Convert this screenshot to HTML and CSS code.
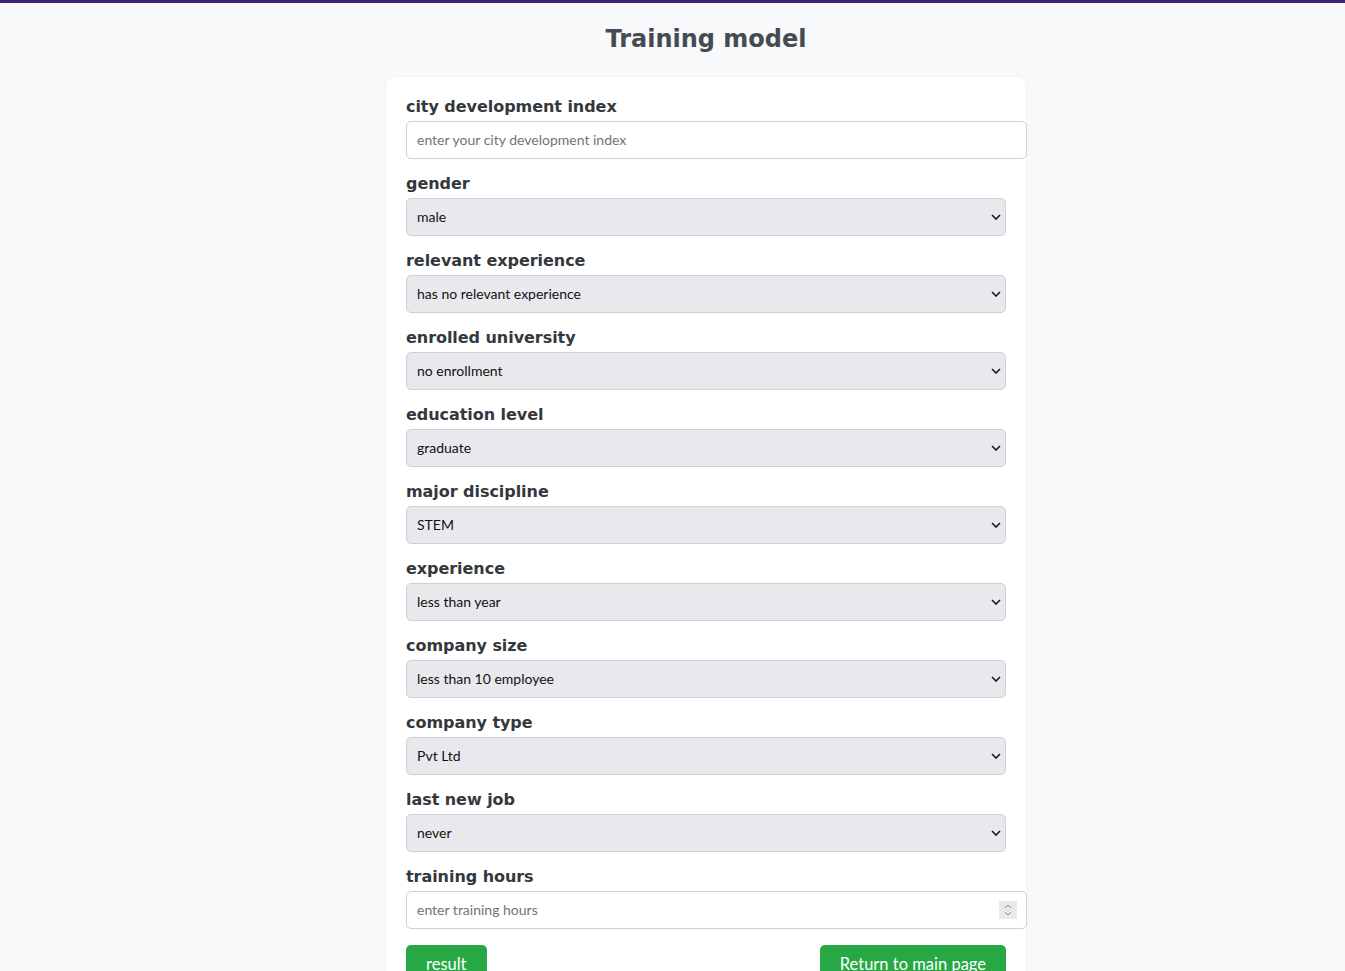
FILE: index.html
```html
<!DOCTYPE html>
<html lang="en">
<head>
<meta charset="utf-8">
<title>Training model</title>
<link rel="stylesheet" href="styles.css">
</head>
<body>
<div class="topbar"></div>
<main class="page">
  <h1 class="title">Training model</h1>
  <form class="card">
    <div class="field">
      <label class="label">city development index</label>
      <input class="text-input" type="text" placeholder="enter your city development index">
    </div>
    <div class="field">
      <label class="label">gender</label>
      <div class="select-wrap"><div class="select">male</div><svg class="chev" viewBox="0 0 10 6" width="10" height="6"><path d="M1 1l4 4 4-4" fill="none" stroke="#1a1a1a" stroke-width="1.6"/></svg></div>
    </div>
    <div class="field">
      <label class="label">relevant experience</label>
      <div class="select-wrap"><div class="select">has no relevant experience</div><svg class="chev" viewBox="0 0 10 6" width="10" height="6"><path d="M1 1l4 4 4-4" fill="none" stroke="#1a1a1a" stroke-width="1.6"/></svg></div>
    </div>
    <div class="field">
      <label class="label">enrolled university</label>
      <div class="select-wrap"><div class="select">no enrollment</div><svg class="chev" viewBox="0 0 10 6" width="10" height="6"><path d="M1 1l4 4 4-4" fill="none" stroke="#1a1a1a" stroke-width="1.6"/></svg></div>
    </div>
    <div class="field">
      <label class="label">education level</label>
      <div class="select-wrap"><div class="select">graduate</div><svg class="chev" viewBox="0 0 10 6" width="10" height="6"><path d="M1 1l4 4 4-4" fill="none" stroke="#1a1a1a" stroke-width="1.6"/></svg></div>
    </div>
    <div class="field">
      <label class="label">major discipline</label>
      <div class="select-wrap"><div class="select">STEM</div><svg class="chev" viewBox="0 0 10 6" width="10" height="6"><path d="M1 1l4 4 4-4" fill="none" stroke="#1a1a1a" stroke-width="1.6"/></svg></div>
    </div>
    <div class="field">
      <label class="label">experience</label>
      <div class="select-wrap"><div class="select">less than year</div><svg class="chev" viewBox="0 0 10 6" width="10" height="6"><path d="M1 1l4 4 4-4" fill="none" stroke="#1a1a1a" stroke-width="1.6"/></svg></div>
    </div>
    <div class="field">
      <label class="label">company size</label>
      <div class="select-wrap"><div class="select">less than 10 employee</div><svg class="chev" viewBox="0 0 10 6" width="10" height="6"><path d="M1 1l4 4 4-4" fill="none" stroke="#1a1a1a" stroke-width="1.6"/></svg></div>
    </div>
    <div class="field">
      <label class="label">company type</label>
      <div class="select-wrap"><div class="select">Pvt Ltd</div><svg class="chev" viewBox="0 0 10 6" width="10" height="6"><path d="M1 1l4 4 4-4" fill="none" stroke="#1a1a1a" stroke-width="1.6"/></svg></div>
    </div>
    <div class="field">
      <label class="label">last new job</label>
      <div class="select-wrap"><div class="select">never</div><svg class="chev" viewBox="0 0 10 6" width="10" height="6"><path d="M1 1l4 4 4-4" fill="none" stroke="#1a1a1a" stroke-width="1.6"/></svg></div>
    </div>
    <div class="field">
      <label class="label">training hours</label>
      <div class="number-wrap">
        <input class="text-input" type="text" placeholder="enter training hours">
        <span class="spin"><svg viewBox="0 0 10 16" width="10" height="16"><path d="M2 6l3-3 3 3M2 10l3 3 3-3" fill="none" stroke="#8a8a8a" stroke-width="1"/></svg></span>
      </div>
    </div>
    <div class="actions">
      <button type="button" class="btn">result</button>
      <button type="button" class="btn">Return to main page</button>
    </div>
  </form>
</main>
</body>
</html>
```

FILE: styles.css
```css
html, body {
  margin: 0;
  padding: 0;
}
body {
  background: #f8f9fa;
  font-family: "DejaVu Sans", sans-serif;
  color: #343a40;
}
.topbar {
  height: 3px;
  background: #3c2566;
}
.page {
  width: 640px;
  margin-left: 386px;
  padding-top: 23px;
}
.title {
  margin: 0 0 25px 0;
  text-align: center;
  font-family: "DejaVu Sans", sans-serif;
  font-weight: bold;
  font-size: 24px;
  line-height: 26px;
  color: #454b52;
}
.card {
  background: #fff;
  border-radius: 9px;
  box-shadow: 0 0 4px rgba(0,0,0,0.04);
  padding: 20px 20px 40px 20px;
  min-height: 900px;
}
.field {
  display: flex;
  flex-direction: column;
  margin-bottom: 15px;
}
.label {
  font-family: "DejaVu Sans", sans-serif;
  font-weight: bold;
  font-size: 16px;
  line-height: 19px;
  color: #33383d;
  margin-bottom: 5px;
  letter-spacing: -0.05px;
}
.text-input {
  box-sizing: border-box;
  width: 621px;
  height: 38px;
  border: 1px solid #ced1d6;
  border-radius: 5px;
  padding: 0 10px 2px 10px;
  font-family: "Lato", sans-serif;
  font-size: 14px;
  color: #212529;
  background: #fff;
  outline: none;
}
.text-input::placeholder {
  color: #6f747a;
}
.select-wrap {
  position: relative;
  width: 600px;
}
.select {
  box-sizing: border-box;
  height: 38px;
  display: flex;
  align-items: center;
  border: 1px solid #cfd0d6;
  border-radius: 5px;
  background: #e9e9ed;
  padding: 0 10px 2px 10px;
  font-family: "Lato", sans-serif;
  font-size: 14px;
  color: #111;
}
.chev {
  position: absolute;
  right: 5px;
  top: 16px;
}
.number-wrap {
  position: relative;
  width: 621px;
}
.spin {
  position: absolute;
  right: 10px;
  top: 10px;
  width: 18px;
  height: 18px;
  background: #e9e9ed;
  display: flex;
  align-items: center;
  justify-content: center;
}
.actions {
  display: flex;
  justify-content: space-between;
  width: 600px;
  margin-top: 16px;
}
.btn {
  background: #28a745;
  color: #fff;
  border: none;
  border-radius: 5px;
  font-family: "Lato", sans-serif;
  font-size: 16.5px;
  line-height: 24px;
  padding: 7px 20px 9px 20px;
}
```
